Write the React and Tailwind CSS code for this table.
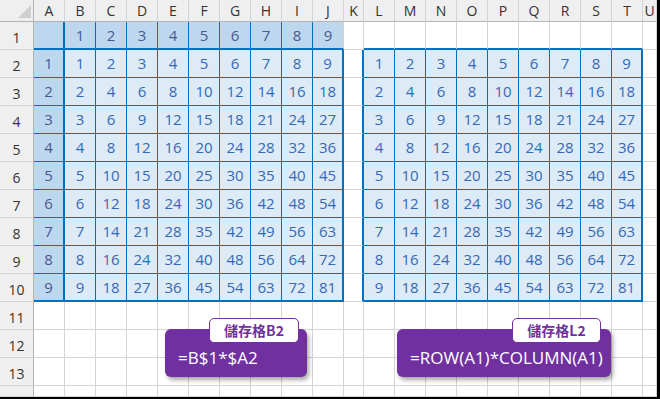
import React from "react";

const LETTERS = "ABCDEFGHIJKLMNOPQRSTU".split("");
const ROWS = 14;

// border presets, written in full so Tailwind finds them
const R_GRAY = "border-r border-r-[#d4d4d4]";
const R_BLUE = "border-r border-r-[#0070c0]";
const R_THICK = "border-r-2 border-r-[#0070c0]";
const B_GRAY = "border-b border-b-[#d4d4d4]";
const B_BLUE = "border-b border-b-[#0070c0]";
const B_THICK = "border-b-2 border-b-[#0070c0]";

function cellInfo(r, c) {
  let bg = "bg-white";
  let text = "text-[#3568b5]";
  let value = "";
  let right = R_GRAY;
  let bottom = B_GRAY;

  const inT1 = r >= 1 && r <= 10 && c >= 1 && c <= 10;
  const inT2 = r >= 1 && r <= 10 && c >= 12 && c <= 20;

  if (inT1) {
    if (r === 1 || c === 1) {
      bg = "bg-[#bdd7ee]";
      text = "text-[#4a5792]";
    } else {
      bg = "bg-[#ddebf7]";
    }
    if (r === 1 && c >= 2) value = c - 1;
    else if (c === 1 && r >= 2) value = r - 1;
    else if (r >= 2 && c >= 2) value = (r - 1) * (c - 1);

    if (c === 1) right = R_THICK;
    else if (c === 10) right = r === 1 ? R_GRAY : R_THICK;
    else right = R_BLUE;

    if (r === 1 || r === 10) bottom = B_THICK;
    else bottom = B_BLUE;
  }

  if (c === 11 && r >= 2 && r <= 10) right = R_THICK;

  if (inT2) {
    if (r === 1) {
      bottom = B_THICK;
    } else {
      bg = "bg-[#ddebf7]";
      value = (r - 1) * (c - 11);
      right = c === 20 ? R_THICK : R_BLUE;
      bottom = r === 10 ? B_THICK : B_BLUE;
    }
  }

  return { bg, text, value, right, bottom };
}

function Corner() {
  return (
    <div className="bg-[#efefef] border-r border-r-[#b4b4b4] border-b border-b-[#b4b4b4] relative">
      <svg width="34" height="22" className="absolute left-0 top-0">
        <polygon points="31,5 31,18 18,18" fill="#cfcfcf" />
      </svg>
    </div>
  );
}

function Callout({ className, label, labelClass, formula }) {
  return (
    <>
      <div
        className={`absolute bg-[#7030a0] rounded-[6px] shadow-[2px_3px_4px_rgba(0,0,0,0.35)] pt-[17px] pl-[13px] text-white text-[17px] leading-[24px] ${className}`}
        style={{ fontFamily: '"Open Sans", "Noto Sans CJK TC", sans-serif' }}
      >
        {formula}
      </div>
      <div
        className={`absolute h-[25px] bg-white border border-[#7030a0] rounded-[5px] flex items-center justify-center text-[#7030a0] font-bold text-[14px] ${labelClass}`}
        style={{ fontFamily: '"Noto Sans CJK TC", sans-serif' }}
      >
        {label}
      </div>
    </>
  );
}

export default function App() {
  const cells = [];

  // header row
  cells.push(<Corner key="corner" />);
  LETTERS.forEach((l, i) => {
    cells.push(
      <div
        key={`h${i}`}
        className="bg-[#efefef] border-r border-r-[#d4d4d4] border-b border-b-[#b4b4b4] flex items-center justify-center text-[14px] text-[#333333]"
      >
        {l}
      </div>
    );
  });

  for (let r = 1; r <= ROWS; r++) {
    cells.push(
      <div
        key={`rh${r}`}
        className="bg-[#efefef] border-r border-r-[#b4b4b4] border-b border-b-[#d4d4d4] flex items-end justify-center pb-[2px] leading-[18px] text-[14px] text-[#333333]"
      >
        {r <= 13 ? r : ""}
      </div>
    );
    for (let c = 1; c <= 21; c++) {
      const { bg, text, value, right, bottom } = cellInfo(r, c);
      cells.push(
        <div
          key={`c${r}-${c}`}
          className={`${bg} ${text} ${right} ${bottom} flex items-center justify-center text-[15px]`}
        >
          {value}
        </div>
      );
    }
  }

  return (
    <div
      className="w-[660px] h-[399px] overflow-hidden bg-white border-r-[3px] border-r-black border-b-2 border-b-black"
      style={{ fontFamily: '"Open Sans", "Noto Sans", sans-serif' }}
    >
      <div className="relative grid grid-cols-[34px_repeat(10,31px)_20px_repeat(9,31px)_14px] grid-rows-[22px_repeat(13,28px)_11px]">
        {cells}

        <Callout
          className="left-[165px] top-[329px] w-[142px] h-[48px]"
          labelClass="left-[209px] top-[318px] w-[90px]"
          label="儲存格B2"
          formula="=B$1*$A2"
        />
        <Callout
          className="left-[397px] top-[329px] w-[214px] h-[48px] pl-[12px]"
          labelClass="left-[512px] top-[318px] w-[89px]"
          label="儲存格L2"
          formula="=ROW(A1)*COLUMN(A1)"
        />
      </div>
    </div>
  );
}
